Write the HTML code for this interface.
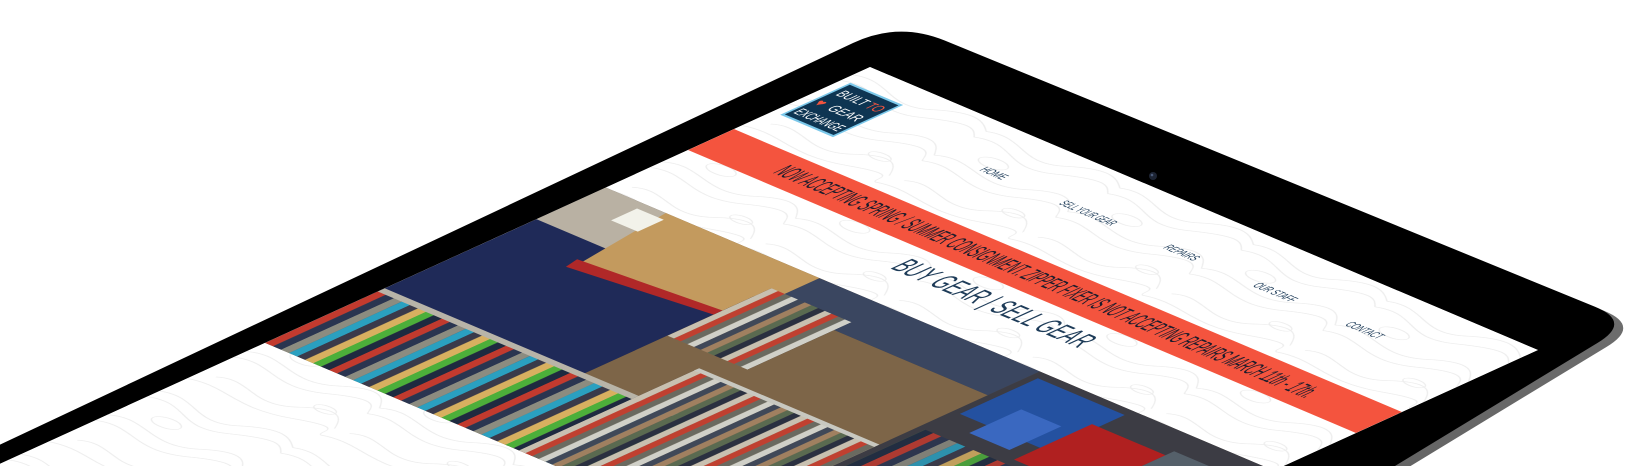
<!DOCTYPE html>
<html><head><meta charset="utf-8"><style>
html,body{margin:0;padding:0;background:#fff;width:1650px;height:466px;overflow:hidden;position:relative}
#wrap{position:absolute;left:0;top:0;width:1650px;height:466px;overflow:hidden}
#dev{position:absolute;left:0;top:0;display:block}
#scr{position:absolute;left:0;top:0;width:1000px;height:1100px;overflow:hidden;transform-origin:0 0;transform:matrix(0.668,0.283,-0.8667,0.3952,870,67);background:#fff}
text{font-family:"Liberation Sans",sans-serif}
</style></head><body>
<div id="wrap">
<svg id="dev" width="1650" height="466" viewBox="0 0 1650 466">
<defs><linearGradient id="sil" x1="0" y1="0" x2="1" y2="1"><stop offset="0" stop-color="#d0d0d0"/><stop offset="0.5" stop-color="#8a8a8a"/><stop offset="1" stop-color="#5e5e5e"/></linearGradient></defs>
<path transform="translate(9,4)" fill="url(#sil)" d="M0 444.6 L853 43 Q898.4 21.5 944.7 40.5 L1595 306.8 Q1632 322 1597.8 342.7 L1395 466 L0 466 Z"/>
<path fill="#000" d="M0 444.6 L853 43 Q898.4 21.5 944.7 40.5 L1595 306.8 Q1632 322 1597.8 342.7 L1395 466 L0 466 Z"/>
<circle cx="1153" cy="176" r="4" fill="#1d2433"/><circle cx="1152" cy="175" r="1.3" fill="#4a5a78"/>
</svg>
<div id="scr">
<svg width="1000" height="1100" viewBox="0 0 1000 1100">
<defs>
<pattern id="topo" width="200" height="160" patternUnits="userSpaceOnUse">
<g fill="none" stroke="#ededed" stroke-width="1.3">
<path d="M0 20 C40 5 80 45 120 22 S180 8 200 20"/>
<path d="M0 34 C45 18 75 60 125 38 S185 22 200 34"/>
<path d="M0 80 C35 60 85 100 130 74 S190 70 200 80"/>
<path d="M0 94 C40 78 80 115 135 90 S192 85 200 94"/>
<path d="M20 130 C50 112 95 150 135 124 S190 118 200 132"/>
<path d="M0 148 C45 135 85 162 150 142 S190 145 200 148"/>
<ellipse cx="60" cy="58" rx="20" ry="8"/>
<ellipse cx="160" cy="112" rx="15" ry="6"/>
</g></pattern>
<pattern id="rack" width="96" height="400" patternUnits="userSpaceOnUse">
<rect x="0" width="12" height="400" fill="#c23a2e"/><rect x="12" width="12" height="400" fill="#2a3550"/>
<rect x="24" width="12" height="400" fill="#8c8c80"/><rect x="36" width="12" height="400" fill="#2aa0c0"/>
<rect x="48" width="12" height="400" fill="#3a3a4a"/><rect x="60" width="12" height="400" fill="#d8b060"/>
<rect x="72" width="12" height="400" fill="#4caf3a"/><rect x="84" width="12" height="400" fill="#1e2a40"/>
</pattern>
<pattern id="rack2" width="80" height="400" patternUnits="userSpaceOnUse">
<rect x="0" width="10" height="400" fill="#6a6a60"/><rect x="10" width="10" height="400" fill="#d0d0c8"/>
<rect x="20" width="10" height="400" fill="#404858"/><rect x="30" width="10" height="400" fill="#a08060"/>
<rect x="40" width="10" height="400" fill="#5a6a50"/><rect x="50" width="10" height="400" fill="#2a3040"/>
<rect x="60" width="10" height="400" fill="#c8c0b0"/><rect x="70" width="10" height="400" fill="#c04030"/>
</pattern>
</defs>
<rect width="1000" height="1100" fill="#fff"/>
<rect width="1000" height="1100" fill="url(#topo)"/>
<rect x="13" y="33" width="76" height="78" fill="#0e3552" stroke="#7cc8ea" stroke-width="3"/>
<text x="20" y="56" font-size="17" fill="#fff" textLength="40" lengthAdjust="spacingAndGlyphs">BUILT</text>
<text x="63" y="56" font-size="17" fill="#f4543e" textLength="20" lengthAdjust="spacingAndGlyphs">TO</text>
<text x="18" y="80" font-size="17" fill="#f4543e">♥</text>
<text x="38" y="80" font-size="17" fill="#fff" textLength="44" lengthAdjust="spacingAndGlyphs">GEAR</text>
<text x="18" y="103" font-size="17" fill="#fff" textLength="66" lengthAdjust="spacingAndGlyphs">EXCHANGE</text>
<g font-size="14" fill="#1d3b58">
<text x="260" y="75" textLength="34" lengthAdjust="spacingAndGlyphs">HOME</text>
<text x="379" y="75" textLength="78" lengthAdjust="spacingAndGlyphs">SELL YOUR GEAR</text>
<text x="535" y="75" textLength="46" lengthAdjust="spacingAndGlyphs">REPAIRS</text>
<text x="669" y="75" textLength="58" lengthAdjust="spacingAndGlyphs">OUR STAFF</text>
<text x="807" y="75" textLength="50" lengthAdjust="spacingAndGlyphs">CONTACT</text>
</g>
<rect x="0" y="157" width="1000" height="53" fill="#f4543e"/>
<text x="104" y="193" font-size="30" fill="#1a1c2c" textLength="797" lengthAdjust="spacingAndGlyphs">NOW ACCEPTING SPRING / SUMMER CONSIGNMENT. ZIPPER FIXER IS NOT ACCEPTING REPAIRS MARCH 11th - 17th.</text>
<text x="357" y="253" font-size="36" fill="#1d3b58" textLength="283" lengthAdjust="spacingAndGlyphs">BUY GEAR | SELL GEAR</text>
<g transform="translate(0,305)">
<rect width="1000" height="393" fill="#5a4a3c"/>
<rect x="0" y="0" width="110" height="150" fill="#b9b1a3"/>
<rect x="0" y="80" width="300" height="200" fill="#1f2a58"/>
<polygon points="90,0 330,0 320,95 110,120" fill="#c39a5e"/>
<polygon points="100,110 320,95 318,105 104,126" fill="#b02828"/>
<rect x="60" y="10" width="40" height="30" fill="#f2f2ea"/>
<rect x="300" y="60" width="360" height="333" fill="#7d6548"/>
<rect x="320" y="0" width="330" height="60" fill="#3a4660"/>
<rect x="300" y="40" width="120" height="120" fill="url(#rack2)"/>
<rect x="0" y="260" width="470" height="133" fill="url(#rack)"/>
<rect x="0" y="255" width="470" height="8" fill="#b8b4a8"/>
<rect x="380" y="190" width="270" height="203" fill="url(#rack2)"/>
<rect x="380" y="185" width="270" height="6" fill="#c8c8c0"/>
<rect x="650" y="0" width="350" height="393" fill="#3c3c44"/>
<rect x="660" y="10" width="130" height="90" fill="#2451a0"/>
<rect x="700" y="60" width="60" height="60" fill="#3a68c0"/>
<rect x="780" y="40" width="110" height="90" fill="#b02020"/>
<rect x="890" y="30" width="110" height="100" fill="#55606a"/>
<rect x="660" y="140" width="340" height="253" fill="url(#rack)" opacity="0.85"/>
</g>
</svg>
</div>
</div>
</body></html>
